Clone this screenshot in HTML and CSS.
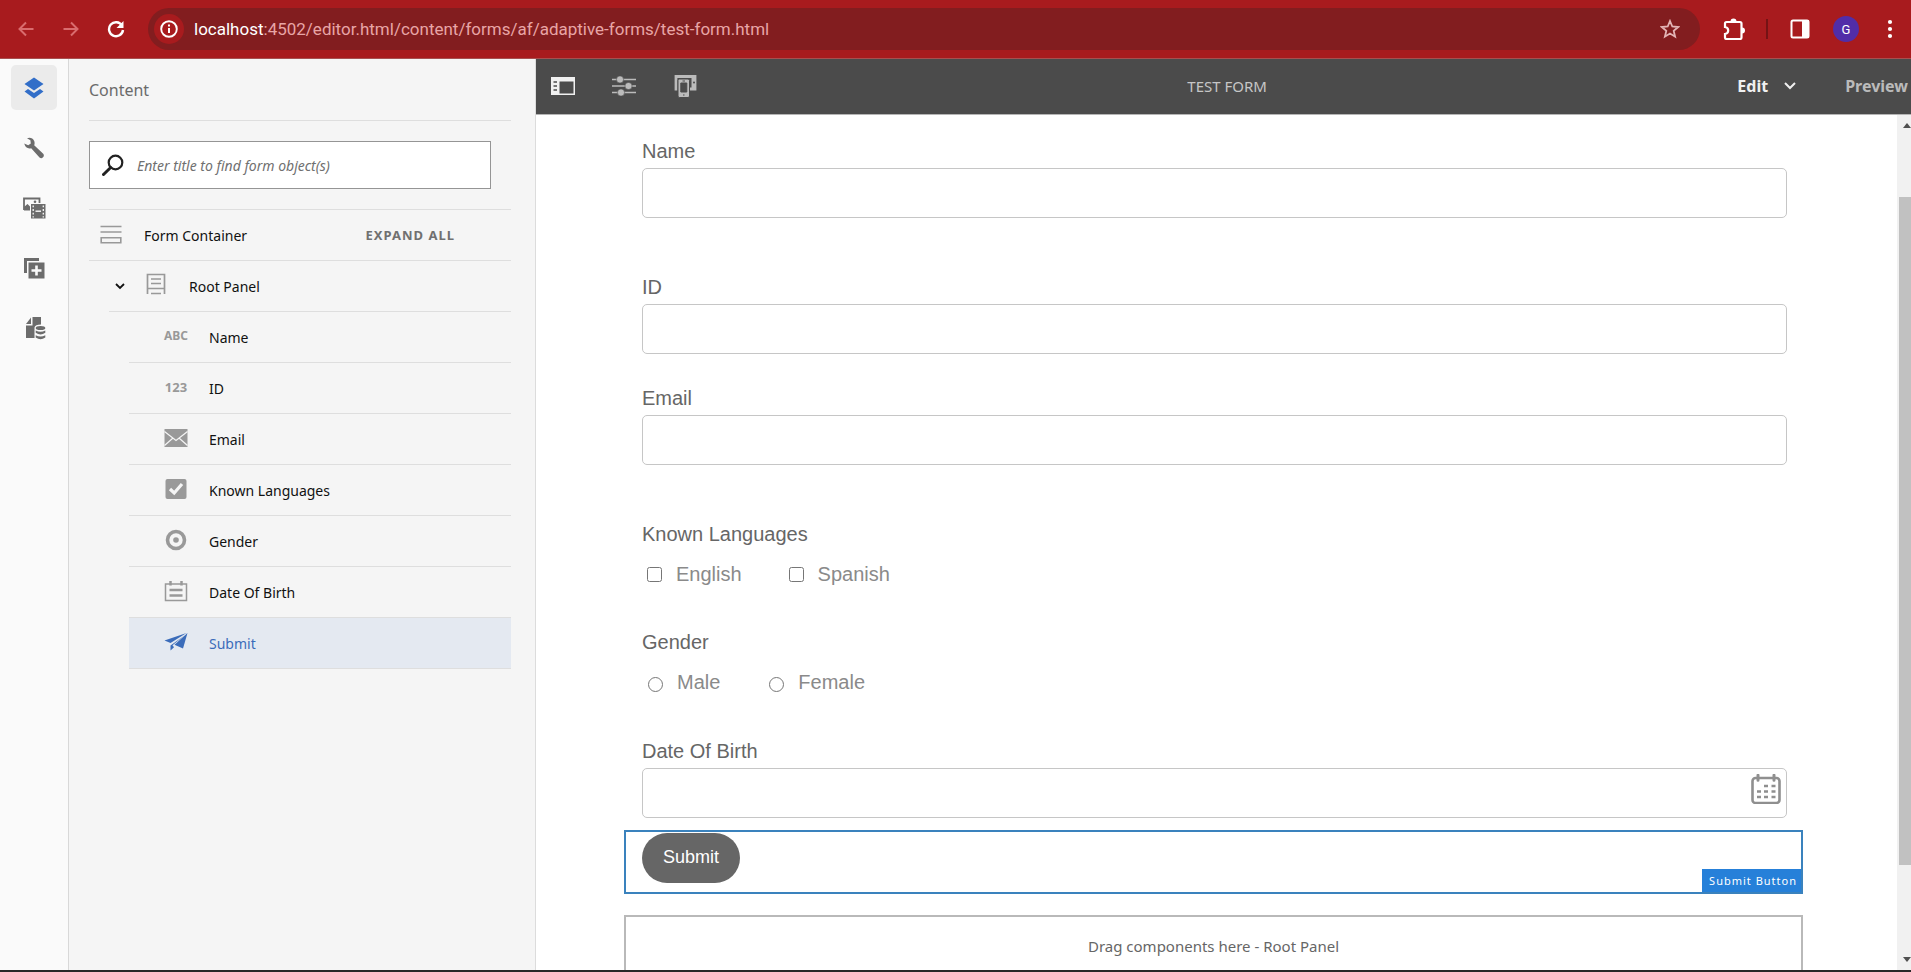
FILE: index.html
```html
<!DOCTYPE html>
<html lang="en">
<head>
<meta charset="utf-8">
<title>Test Form</title>
<link rel="stylesheet" href="styles.css">
</head>
<body>
<header class="browser">
  <button class="nav dim" aria-label="Back"><svg width="16" height="16" viewBox="0 0 16 16"><path d="M15.500 8H2M8 1.500 1.500 8 8 14.500" fill="none" stroke="currentColor" stroke-width="2"/></svg></button>
  <button class="nav dim" aria-label="Forward"><svg width="16" height="16" viewBox="0 0 16 16"><path d="M.5 8H14M8 1.500 14.500 8 8 14.500" fill="none" stroke="currentColor" stroke-width="2"/></svg></button>
  <button class="nav" aria-label="Reload"><svg width="18" height="18" viewBox="0 0 18 18"><path d="M15 5.500A7 7 0 1 0 16 10" fill="none" stroke="currentColor" stroke-width="2.400"/><path d="M16.500 1v7h-7z" fill="currentColor"/></svg></button>
  <div class="address">
    <button class="info" aria-label="Site information"><svg width="18" height="18" viewBox="0 0 18 18"><circle cx="9" cy="9" r="7.800" fill="none" stroke="currentColor" stroke-width="1.900"/><path d="M9 8v5M9 4.600v2" stroke="currentColor" stroke-width="2"/></svg></button>
    <p class="url"><span class="host">localhost</span>:4502/editor.html/content/forms/af/adaptive-forms/test-form.html</p>
    <button class="star" aria-label="Bookmark"><svg width="20" height="20" viewBox="0 0 20 20"><path d="M10 2l2.300 5.500 5.900.5-4.500 3.900 1.400 5.800-5.100-3.100-5.100 3.100 1.400-5.800L1.800 8l5.900-.5z" fill="none" stroke="currentColor" stroke-width="1.800"/></svg></button>
  </div>
  <div class="tools">
    <button aria-label="Extensions"><svg width="22" height="22" viewBox="0 0 22 22"><path d="M2 5.500Q2 4 3.500 4H17q1.500 0 1.500 1.500v14q0 1.500-1.500 1.500H3.500Q2 21 2 19.500V16q3.200-.5 3.200-3.500T2 9z" fill="none" stroke="currentColor" stroke-width="2.200"/><path d="M7.500 3.500a3 3 0 0 1 6 0zM19 9.500a3 3 0 0 1 0 6z" fill="currentColor"/></svg></button>
    <span class="separator"></span>
    <button aria-label="Side panel"><svg width="20" height="20" viewBox="0 0 20 20"><rect x="1.500" y="1.500" width="17" height="17" rx="1.500" fill="none" stroke="currentColor" stroke-width="2"/><path d="M12 1h7v18h-7z" fill="currentColor"/></svg></button>
    <button class="avatar" aria-label="Profile">G</button>
    <button aria-label="Menu"><svg width="6" height="20" viewBox="0 0 6 20" fill="currentColor"><circle cx="3" cy="3" r="2.100"/><circle cx="3" cy="10" r="2.100"/><circle cx="3" cy="17" r="2.100"/></svg></button>
  </div>
</header>
<div class="workspace">
  <nav class="rail">
    <button class="active" aria-label="Content"><svg width="20" height="22" viewBox="0 0 20 22" fill="currentColor"><path d="M10 .5 19.500 7 10 13.500.5 7z"/><path d="M.5 14.500 4 12.100l6 4 6-4 3.500 2.400L10 21.500z"/></svg></button>
    <button aria-label="Properties"><svg width="22" height="22" viewBox="0 0 22 22"><path d="M4 1.200Q9-.4 11.200 4q.8 2.300 0 4.200l9 8.600q1.400 1.800-.2 3.500t-3.500.2L8.200 11.200Q3 12.500 1.200 6.500l4 1.800 2.600-1.900-.4-3.200z" fill="currentColor"/></svg></button>
    <button aria-label="Assets"><svg width="24" height="24" viewBox="0 0 24 24"><path d="M2 14V2.500h15.500V7" fill="none" stroke="currentColor" stroke-width="1.800"/><path d="M2 14.500V11l3.500-3L8 10.500v4z" fill="currentColor"/><circle cx="13" cy="5.800" r="1.300" fill="currentColor"/><path d="M9 8h14.500v14.500H9z" fill="currentColor"/><path d="M11.200 9.500v12M21.300 9.500v12" stroke="#fafafa" stroke-width="1.300" stroke-dasharray="1.800 1.800"/><path d="M13.500 15.200h5.500" stroke="#fafafa" stroke-width="1.400"/></svg></button>
    <button aria-label="Components"><svg width="22" height="22" viewBox="0 0 22 22"><path d="M1 1h15v3H4v12H1z" fill="currentColor"/><path d="M5.500 5.500h16v16h-16z" fill="currentColor"/><path d="M13.500 8.500v10M8.500 13.500h10" stroke="#fafafa" stroke-width="2.600"/></svg></button>
    <button aria-label="Data sources"><svg width="24" height="24" viewBox="0 0 24 24" fill="currentColor"><path d="M4 8 9 1.500V8z"/><path d="M10.500 1H19v7.500q-6 0-6.500 3V22H4V9.500h6.500z"/><ellipse cx="18.500" cy="12" rx="4.800" ry="2"/><path d="M13.700 14.500q4.800 2.600 9.600 0v2.300q-4.800 3.300-9.600 0zM13.700 19.200q4.800 2.600 9.600 0v2.300q-4.800 3.300-9.600 0z"/></svg></button>
  </nav>
  <aside class="panel">
    <h2 class="panel-title">Content</h2>
    <div class="search">
      <svg width="22" height="22" viewBox="0 0 22 22"><circle cx="13.500" cy="8.500" r="6.800" fill="none" stroke="currentColor" stroke-width="2.200"/><path d="M8.700 13.500 1.500 20.500" stroke="currentColor" stroke-width="3" stroke-linecap="round"/></svg>
      <input type="text" aria-label="Find form objects" placeholder="Enter title to find form object(s)">
    </div>
    <ul class="tree">
      <li class="row level-1"><svg class="row-icon" width="22" height="22" viewBox="0 0 22 22"><path d="M.5 2.500h21M.5 8h21M1.200 13.800h19.600v5H1.200z" fill="none" stroke="currentColor" stroke-width="1.600"/></svg><span>Form Container</span><button class="expand">EXPAND ALL</button></li>
      <li class="row level-2"><button class="toggle" aria-label="Collapse"><svg width="10" height="8" viewBox="0 0 10 8"><path d="M1 2l4 4 4-4" fill="none" stroke="currentColor" stroke-width="1.800"/></svg></button><svg class="row-icon" width="22" height="22" viewBox="0 0 22 22"><path d="M2.500 21V1.500h17V21M2.500 15.500h17M6 6h10M6 10.500h10M6 20.500h10" fill="none" stroke="currentColor" stroke-width="1.700"/></svg><span>Root Panel</span></li>
      <li class="row level-3"><span class="row-icon glyph">ABC</span><span>Name</span></li>
      <li class="row level-3"><span class="row-icon glyph digits">123</span><span>ID</span></li>
      <li class="row level-3"><svg class="row-icon" width="24" height="20" viewBox="0 0 24 20"><path d="M.5 1h23v18H.5z" fill="currentColor"/><path d="M.5 3.500 12 12.500 23.500 3.500M.5 17.500 9 10M23.500 17.500 15 10" fill="none" stroke="#f5f5f5" stroke-width="1.200"/></svg><span>Email</span></li>
      <li class="row level-3"><svg class="row-icon" width="22" height="22" viewBox="0 0 22 22"><rect x=".5" y="1" width="21" height="20" rx="2" fill="currentColor"/><path d="M5 11 9.200 15 17 6" fill="none" stroke="#f5f5f5" stroke-width="3.200"/></svg><span>Known Languages</span></li>
      <li class="row level-3"><svg class="row-icon" width="22" height="22" viewBox="0 0 22 22"><circle cx="11" cy="11" r="8.500" fill="none" stroke="currentColor" stroke-width="3.600"/><circle cx="11" cy="11" r="2.800" fill="currentColor"/></svg><span>Gender</span></li>
      <li class="row level-3"><svg class="row-icon" width="24" height="22" viewBox="0 0 24 22"><path d="M1.500 4h21v16.500h-21z" fill="none" stroke="currentColor" stroke-width="1.500"/><path d="M6.500 1v4.500M17.500 1v4.500M5.500 10h13M5.500 15.500h13" stroke="currentColor" stroke-width="2.500"/></svg><span>Date Of Birth</span></li>
      <li class="row level-3 selected"><svg class="row-icon" width="24" height="20" viewBox="0 0 24 20" fill="currentColor"><path d="M.5 8.500 22.500 1 6.500 11z"/><path d="M23.500 1 19 16.500l-8.500-3.700z"/><path d="M20.500 3.500 6.500 13.500v5l3.500-3.300-1.500-2z"/></svg><span>Submit</span></li>
    </ul>
  </aside>
  <main class="editor">
    <div class="toolbar">
      <button aria-label="Toggle side panel" class="bright"><svg width="24" height="18" viewBox="0 0 24 18"><path d="M0 0h24v18H0z" fill="currentColor"/><path d="M8.500 4.500h14v12h-14z" fill="#4b4b4b"/><path d="M2.500 5H6M2.500 9H6M2.500 13H6" stroke="#4b4b4b" stroke-width="1.300"/></svg></button>
      <button aria-label="Page information"><svg width="24" height="20" viewBox="0 0 24 20"><path d="M0 3.500h24M0 10h24M0 16.500h24" stroke="currentColor" stroke-width="1.700"/><g fill="currentColor" stroke="#4b4b4b" stroke-width=".6"><circle cx="8" cy="3.500" r="3.600"/><circle cx="16.500" cy="10" r="3.600"/><circle cx="9" cy="16.500" r="3.600"/></g></svg></button>
      <button aria-label="Emulator"><svg width="24" height="24" viewBox="0 0 24 24"><path d="M3 16.500V2.500h19V15h-6" fill="none" stroke="currentColor" stroke-width="2.800"/><path d="M18.500 2H23v14h-4.500z" fill="currentColor"/><circle cx="21" cy="8.500" r="1" fill="#4b4b4b"/><rect x="5" y="5" width="11.500" height="18.500" rx="1.500" fill="currentColor" stroke="#4b4b4b"/><path d="M7.800 9h6v9h-6zM9.500 7h2.500M10 21h1.500" fill="#4b4b4b" stroke="#4b4b4b"/></svg></button>
      <h1 class="form-title">TEST FORM</h1>
      <button class="mode">Edit<svg width="12" height="9" viewBox="0 0 12 9"><path d="M1 2l5 5 5-5" fill="none" stroke="currentColor" stroke-width="2"/></svg></button>
      <button class="preview">Preview</button>
    </div>
    <div class="viewport">
      <form class="canvas">
        <div class="field gap-large"><label for="name">Name</label><input id="name" type="text"></div>
        <div class="field gap-small"><label for="id">ID</label><input id="id" type="text"></div>
        <div class="field gap-large"><label for="email">Email</label><input id="email" type="email"></div>
        <fieldset class="field options">
          <legend>Known Languages</legend>
          <div class="choices"><label><input type="checkbox">English</label><label><input type="checkbox">Spanish</label></div>
        </fieldset>
        <fieldset class="field options">
          <legend>Gender</legend>
          <div class="choices radios"><label><input type="radio" name="gender">Male</label><label><input type="radio" name="gender">Female</label></div>
        </fieldset>
        <div class="field">
          <label for="dob">Date Of Birth</label>
          <div class="date"><input id="dob" type="text"><button type="button" aria-label="Open calendar"><svg width="30" height="30" viewBox="0 0 30 30"><rect x="1.500" y="4" width="27" height="25" rx="3" fill="none" stroke="currentColor" stroke-width="2.600"/><path d="M7 1.200v5M23 1.200v5" stroke="currentColor" stroke-width="3" stroke-linecap="round"/><path d="M13 12h4M20.500 12h4M6 17.500h4M13 17.500h4M20.500 17.500h4M6 23h4M13 23h4M20.500 23h4" stroke="currentColor" stroke-width="2.600"/></svg></button></div>
        </div>
        <div class="selection">
          <button type="button" class="submit">Submit</button>
          <span class="tag">Submit Button</span>
        </div>
        <div class="dropzone">Drag components here - Root Panel</div>
      </form>
      <div class="scrollbar"><span class="arrow up"></span><span class="thumb"></span><span class="arrow down"></span></div>
    </div>
  </main>
</div>
</body>
</html>
```

FILE: styles.css
```css
* { box-sizing: border-box; }

body {
  margin: 0;
  height: 100vh;
  display: flex;
  flex-direction: column;
  overflow: hidden;
  border-bottom: 2px solid #292929;
  background: #fff;
  color: #111;
  font-family: "Noto Sans", "Open Sans", sans-serif;
  font-size: 14px;
}

button {
  display: flex;
  align-items: center;
  justify-content: center;
  margin: 0;
  padding: 0;
  border: 0;
  background: none;
  color: inherit;
  font: inherit;
}

svg { flex: none; display: block; }

/* Browser bar */
.browser {
  flex: none;
  display: flex;
  align-items: center;
  height: 59px;
  padding: 0 18px 0 3px;
  border-bottom: 1px solid #a85050;
  background: #a81b1e;
  color: #fff;
}

.nav { width: 45px; height: 45px; }
.dim { color: #d96c6e; }

.address {
  flex: 1;
  display: flex;
  align-items: center;
  height: 42px;
  margin-left: 10px;
  padding: 0 20px 0 6px;
  border-radius: 21px;
  background: #821d1f;
}

.info {
  width: 30px;
  height: 30px;
  border-radius: 50%;
  background: #a81b1e;
}

.url {
  flex: 1;
  margin: 0 0 0 10px;
  color: #e8a5a6;
  font-family: Roboto, sans-serif;
  font-size: 17px;
  white-space: nowrap;
}

.host { color: #fff; }
.star { color: #e3b4b5; }

.tools { display: flex; align-items: center; margin-left: 23px; }
.separator { width: 2px; height: 20px; margin: 0 22px 0 21px; background: #751315; }

.avatar {
  width: 26px;
  height: 26px;
  margin: 0 28px 0 23px;
  border-radius: 50%;
  background: #512da8;
  font-family: Roboto, sans-serif;
  font-size: 13px;
}

/* Workspace */
.workspace { flex: 1; min-height: 0; display: flex; }

.rail {
  flex: none;
  display: flex;
  flex-direction: column;
  align-items: center;
  gap: 15px;
  width: 69px;
  padding-top: 6px;
  border-right: 1px solid #d8d8d8;
  background: #fafafa;
  color: #6c6c6c;
}

.rail button { width: 46px; height: 45px; border-radius: 5px; }
.rail .active { background: #ebebeb; color: #326ec8; }

.panel {
  flex: none;
  width: 467px;
  padding: 0 24px 0 20px;
  border-right: 1px solid #dcdcdc;
  background: #f5f5f5;
}

.panel-title {
  margin: 0;
  height: 62px;
  border-bottom: 1px solid #dedede;
  color: #6b6b6b;
  font-size: 16px;
  font-weight: 400;
  line-height: 62px;
}

.search {
  display: flex;
  align-items: center;
  gap: 13px;
  height: 48px;
  margin: 20px 20px 20px 0;
  padding: 0 12px;
  border: 1px solid #959595;
  background: #fff;
  color: #222;
}

.search input {
  flex: 1;
  min-width: 0;
  padding: 0;
  border: 0;
  outline: 0;
  background: none;
  font: inherit;
}

.search input::placeholder { color: #707070; font-style: italic; }

.tree { margin: 0; padding: 0; border-top: 1px solid #dedede; list-style: none; }

.row {
  display: flex;
  align-items: center;
  height: 51px;
  border-bottom: 1px solid #dedede;
}

.row-icon { width: 24px; color: #999; }
.glyph { font-size: 12px; font-weight: 700; text-align: center; }
.digits { font-size: 13px; }
.level-1 { gap: 21px; padding-left: 10px; }
.level-2 { gap: 18px; margin-left: 20px; padding-left: 5px; }
.level-2 .row-icon { margin: 0 3px 4px 0; }
.level-3 { gap: 21px; margin-left: 40px; padding-left: 35px; }
.level-3 .row-icon { margin-bottom: 3px; }
.selected, .selected .row-icon { color: #3b6cba; }
.selected { background: #e4e9f1; }

.expand {
  margin: 0 56px 0 auto;
  color: #707070;
  font-size: 13px;
  font-weight: 700;
  letter-spacing: 1px;
}

.toggle { width: 12px; height: 20px; }

/* Editor */
.editor { flex: 1; min-width: 0; display: flex; flex-direction: column; }

.toolbar {
  flex: none;
  display: flex;
  align-items: center;
  height: 56px;
  padding: 0 3px 2px 15px;
  border-bottom: 1px solid #b5b5b5;
  background: #4b4b4b;
  color: #bbb;
}

.toolbar button + button { margin-left: 37px; }
.bright, .toolbar .mode { color: #f0f0f0; }

.form-title {
  flex: 1;
  margin: 0 0 0 20px;
  color: #c6c6c6;
  font-size: 15px;
  font-weight: 400;
  text-align: center;
}

.mode, .preview { font-size: 16px; font-weight: 700; }
.mode { gap: 16px; }
.toolbar .mode + .preview { margin-left: 49px; }

.viewport { flex: 1; min-height: 0; display: flex; }

.canvas {
  flex: 1;
  min-width: 0;
  overflow: hidden;
  padding: 24px 94px 0 88px;
  color: #666;
  font-family: "Liberation Sans", Arial, sans-serif;
  font-size: 20px;
  line-height: 24px;
}

.field { margin: 0 16px 12px 18px; padding: 0; border: 0; }
.gap-large { margin-bottom: 57px; }
.gap-small { margin-bottom: 32px; }
.field > label, legend { display: block; padding: 0; margin-bottom: 5px; }

.field > input, .date {
  display: block;
  width: 100%;
  height: 50px;
  border: 1px solid #c6c6c6;
  border-radius: 5px;
  background: #fff;
}

.options { margin-bottom: 44px; }
.options legend { margin-bottom: 16px; }
.choices { display: flex; gap: 47px; padding-left: 5px; color: #8a8a8a; }
.choices label { display: flex; align-items: center; gap: 14px; }
.choices input { width: 15px; height: 15px; margin: 0; }
.radios { gap: 49px; padding: 0 0 1px 6px; }
.radios input { margin-top: 4px; }

.date { display: flex; padding: 5px; }
.date input { flex: 1; min-width: 0; padding: 0; border: 0; outline: 0; font: inherit; }
.date button { height: 30px; color: #8f8f8f; }

.selection {
  display: flex;
  align-items: flex-start;
  justify-content: space-between;
  height: 64px;
  padding: 1px 0 0 16px;
  border: 2px solid #3a82bd;
}

.submit {
  height: 50px;
  padding: 0 21px 2px;
  border-radius: 25px;
  background: #666;
  color: #fff;
  font-size: 18px;
}

.tag {
  align-self: flex-end;
  padding: 0 4px 0 7px;
  background: #2680d9;
  color: #fff;
  font-family: "Noto Sans", sans-serif;
  font-size: 11px;
  letter-spacing: 1px;
  line-height: 23px;
}

.dropzone {
  height: 120px;
  margin-top: 21px;
  padding-top: 17px;
  border: 2px solid #b9b9b9;
  font-family: "Noto Sans", sans-serif;
  font-size: 15px;
  text-align: center;
}

.scrollbar {
  flex: none;
  display: flex;
  flex-direction: column;
  width: 14px;
  padding: 8px 0 8px 2px;
  background: #f1f1f1;
}

.thumb { height: 668px; margin: 69px 0 auto; background: #c1c1c1; }
.arrow { width: 0; height: 0; margin-left: 4px; border: 4px solid transparent; }
.up { border-top: 0; border-bottom: 5px solid #505050; }
.down { border-bottom: 0; border-top: 5px solid #505050; }
```
